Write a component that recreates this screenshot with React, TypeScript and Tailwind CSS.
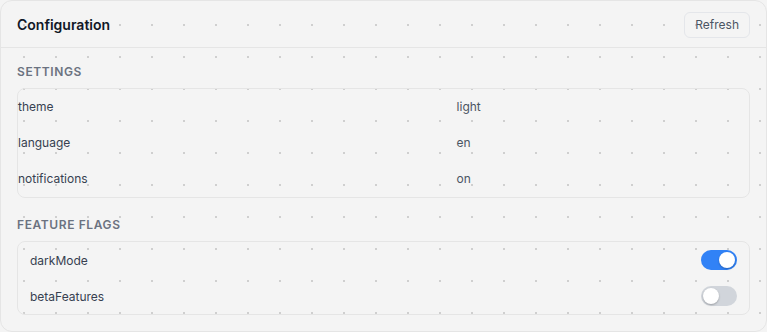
import { useState } from 'react'

type Setting = { key: string; value: string }
type Flag = { name: string; enabled: boolean }

const settings: Setting[] = [
  { key: 'theme', value: 'light' },
  { key: 'language', value: 'en' },
  { key: 'notifications', value: 'on' },
]

const initialFlags: Flag[] = [
  { name: 'darkMode', enabled: true },
  { name: 'betaFeatures', enabled: false },
]

function Toggle({ on, onClick }: { on: boolean; onClick: () => void }) {
  return (
    <button
      type="button"
      onClick={onClick}
      className={
        on
          ? 'flex h-5 w-9 items-center rounded-full bg-[#3182f6] p-0.5 justify-end'
          : 'flex h-5 w-9 items-center rounded-full bg-[#d1d5db] p-0.5 justify-start'
      }
    >
      <span className="h-4 w-4 rounded-full bg-white shadow-[0_1px_2px_rgba(0,0,0,0.25)]" />
    </button>
  )
}

export default function App() {
  const [flags, setFlags] = useState<Flag[]>(initialFlags)

  const flip = (name: string) =>
    setFlags((prev) => prev.map((f) => (f.name === name ? { ...f, enabled: !f.enabled } : f)))

  return (
    <div className="h-[332px] w-full bg-[#f4f4f4] bg-[radial-gradient(circle,#cfcfcf_1px,transparent_1.2px)] bg-[length:32px_32px] bg-[position:8px_9px] font-['Inter',sans-serif]">
      <div className="flex h-full flex-col overflow-hidden rounded-xl border border-[#e5e5e5]">
        <div className="flex h-[47px] shrink-0 items-center justify-between border-b border-[#e5e5e5] px-4 pt-px">
          <h1 className="text-sm font-semibold text-[#111827]">Configuration</h1>
          <button
            type="button"
            className="h-[26px] rounded-md border border-[#e4e6ea] px-2.5 text-xs text-[#4b5563]"
          >
            Refresh
          </button>
        </div>

        <div className="shrink-0 px-4 pt-4 pb-4">
          <p className="mb-2 text-xs leading-4 font-semibold tracking-wider text-[#6b7280] uppercase">Settings</p>
          <div className="rounded-lg border border-[#e5e5e5]">
            {settings.map((s) => (
              <div key={s.key} className="grid h-9 grid-cols-[3fr_2fr] items-center text-xs">
                <span className="text-[#374151]">{s.key}</span>
                <span className="text-[#4b5563]">{s.value}</span>
              </div>
            ))}
          </div>

          <p className="mt-[19px] mb-2 text-xs leading-4 font-semibold tracking-wider text-[#6b7280] uppercase">
            Feature Flags
          </p>
          <div className="rounded-lg border border-[#e5e5e5]">
            {flags.map((f) => (
              <div key={f.name} className="flex h-9 items-center justify-between px-3 text-xs">
                <span className="pt-px text-[#374151]">{f.name}</span>
                <Toggle on={f.enabled} onClick={() => flip(f.name)} />
              </div>
            ))}
          </div>
        </div>
      </div>
    </div>
  )
}
